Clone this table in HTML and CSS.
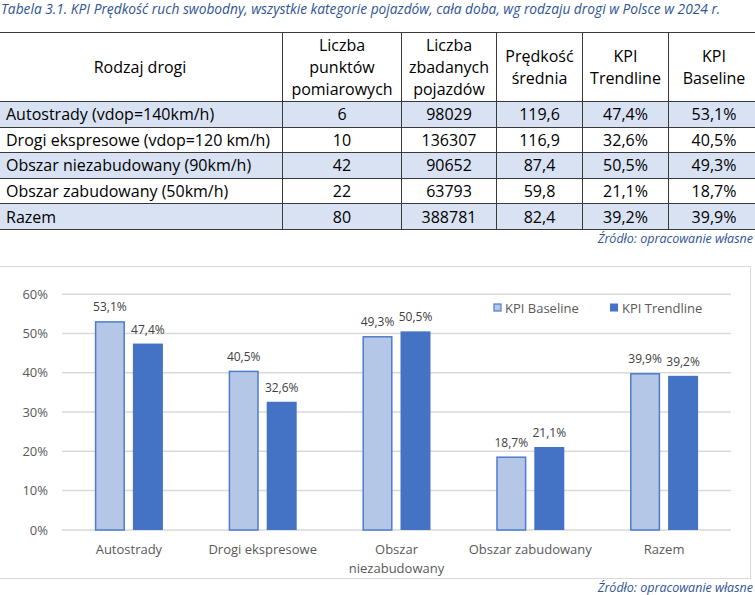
FILE: index.html
```html
<!DOCTYPE html>
<html lang="pl">
<head>
<meta charset="utf-8">
<title>KPI Prędkość</title>
<link rel="stylesheet" href="styles.css">
</head>
<body>
<div class="page">
  <div class="caption">Tabela 3.1. KPI Prędkość ruch swobodny, wszystkie kategorie pojazdów, cała doba, wg rodzaju drogi w Polsce w 2024 r.</div>
  <table class="kpi">
    <colgroup>
      <col class="c1"><col class="c2"><col class="c3"><col class="c4"><col class="c5"><col class="c6">
    </colgroup>
    <thead>
      <tr>
        <th>Rodzaj drogi</th>
        <th>Liczba<br>punktów<br>pomiarowych</th>
        <th class="soft">Liczba<br>zbadanych<br>pojazdów</th>
        <th class="soft">Prędkość<br>średnia</th>
        <th>KPI<br>Trendline</th>
        <th>KPI<br>Baseline</th>
      </tr>
    </thead>
    <tbody>
      <tr class="shade"><td class="name">Autostrady (vdop=140km/h)</td><td>6</td><td>98029</td><td class="soft">119,6</td><td>47,4%</td><td>53,1%</td></tr>
      <tr><td class="name">Drogi ekspresowe (vdop=120 km/h)</td><td>10</td><td>136307</td><td class="soft">116,9</td><td>32,6%</td><td>40,5%</td></tr>
      <tr class="shade"><td class="name">Obszar niezabudowany (90km/h)</td><td>42</td><td>90652</td><td class="soft">87,4</td><td>50,5%</td><td>49,3%</td></tr>
      <tr><td class="name">Obszar zabudowany (50km/h)</td><td>22</td><td>63793</td><td class="soft">59,8</td><td>21,1%</td><td>18,7%</td></tr>
      <tr class="shade"><td class="name">Razem</td><td>80</td><td>388781</td><td class="soft">82,4</td><td>39,2%</td><td>39,9%</td></tr>
    </tbody>
  </table>
  <div class="source">Źródło: opracowanie własne</div>

  <div class="chart">
    <svg class="chart-svg" width="751" height="311" viewBox="-1 266 751 311" xmlns="http://www.w3.org/2000/svg">
      <g class="grid" stroke="#d9d9d9" stroke-width="1.5">
        <line x1="62" x2="731" y1="293.3" y2="293.3"/>
        <line x1="62" x2="731" y1="332.6" y2="332.6"/>
        <line x1="62" x2="731" y1="371.7" y2="371.7"/>
        <line x1="62" x2="731" y1="411" y2="411"/>
        <line x1="62" x2="731" y1="450.3" y2="450.3"/>
        <line x1="62" x2="731" y1="489.6" y2="489.6"/>
        <line x1="62" x2="731" y1="529" y2="529"/>
      </g>
      <g class="ylab" font-family="'Open Sans', sans-serif" font-size="13" fill="#595959" text-anchor="end">
        <text x="48" y="297.8">60%</text>
        <text x="48" y="337.1">50%</text>
        <text x="48" y="376.2">40%</text>
        <text x="48" y="415.5">30%</text>
        <text x="48" y="454.8">20%</text>
        <text x="48" y="494.1">10%</text>
        <text x="48" y="533.5">0%</text>
      </g>
      <g class="base" fill="#b4c7e7" stroke="#4f7bcb" stroke-width="1.5">
        <rect x="95.6" y="320.9" width="28.6" height="208.1"/>
        <rect x="229.4" y="370.4" width="28.6" height="158.6"/>
        <rect x="363.2" y="335.8" width="28.6" height="193.2"/>
        <rect x="497" y="456.2" width="28.6" height="72.8"/>
        <rect x="630.8" y="372.8" width="28.6" height="156.2"/>
      </g>
      <g class="trend" fill="#4472c4">
        <rect x="132.9" y="342.56" width="30" height="186.44"/>
        <rect x="266.7" y="400.77" width="30" height="128.23"/>
        <rect x="400.5" y="330.37" width="30" height="198.63"/>
        <rect x="534.3" y="446.01" width="30" height="82.99"/>
        <rect x="668.1" y="374.81" width="30" height="154.19"/>
      </g>
      <g class="vals" font-family="'Open Sans', sans-serif" font-size="12" fill="#404040" text-anchor="middle">
        <text x="109.9" y="310.1">53,1%</text>
        <text x="147.9" y="332.6">47,4%</text>
        <text x="243.7" y="359.7">40,5%</text>
        <text x="281.7" y="390.8">32,6%</text>
        <text x="377.5" y="325.1">49,3%</text>
        <text x="415.5" y="320.4">50,5%</text>
        <text x="511.3" y="445.5">18,7%</text>
        <text x="549.3" y="436">21,1%</text>
        <text x="645.1" y="362.1">39,9%</text>
        <text x="683.1" y="364.8">39,2%</text>
      </g>
      <g class="xlab" font-family="'Open Sans', sans-serif" font-size="13" fill="#595959" text-anchor="middle">
        <text x="128.9" y="553">Autostrady</text>
        <text x="262.7" y="553">Drogi ekspresowe</text>
        <text x="396.5" y="553">Obszar</text>
        <text x="396.5" y="571.5">niezabudowany</text>
        <text x="530.3" y="553">Obszar zabudowany</text>
        <text x="664.1" y="553">Razem</text>
      </g>
      <g class="legend" font-family="'Open Sans', sans-serif" font-size="13" fill="#595959">
        <rect x="494" y="303" width="7" height="7" fill="#b4c7e7" stroke="#4f7bcb" stroke-width="1.2"/>
        <text x="505" y="311.5">KPI Baseline</text>
        <rect x="610" y="302.5" width="8" height="8" fill="#4472c4"/>
        <text x="622" y="311.5">KPI Trendline</text>
      </g>
    </svg>
  </div>
  <div class="source bottom">Źródło: opracowanie własne</div>
</div>
</body>
</html>
```

FILE: styles.css
```css
html, body {
  margin: 0;
  padding: 0;
  overflow: hidden;
  background: #ffffff;
}

.page {
  width: 755px;
  height: 595px;
  overflow: hidden;
  font-family: "Open Sans", "DejaVu Sans", sans-serif;
  color: #000;
}

.caption {
  height: 18px;
  line-height: 18px;
  margin: 0 0 14px 1px;
  font-size: 13.75px;
  font-style: italic;
  color: #2f5496;
  white-space: nowrap;
}

.kpi {
  border-collapse: collapse;
  table-layout: fixed;
  width: 762px;
  margin-left: -3px;
  font-size: 16px;
}

.kpi .c1 { width: 285px; }
.kpi .c2 { width: 119px; }
.kpi .c3 { width: 95px; }
.kpi .c4 { width: 86px; }
.kpi .c5 { width: 86px; }
.kpi .c6 { width: 91px; }

.kpi th,
.kpi td {
  border: 1px solid #3a3a3a;
  text-align: center;
  vertical-align: middle;
  padding: 0;
  white-space: nowrap;
}

.kpi th {
  font-weight: normal;
  line-height: 22px;
  height: 66px;
  padding: 1px 0;
}

.kpi th.soft,
.kpi td.soft {
  border-left-color: #8a8a8a;
}

.kpi td {
  height: 24.6px;
  line-height: 22px;
}

.kpi td.name {
  text-align: left;
  padding-left: 8px;
}

.kpi tr.shade td {
  background: #d9e2f3;
}

.source {
  text-align: right;
  padding-right: 2px;
  font-size: 12.5px;
  line-height: 18px;
  height: 18px;
  font-style: italic;
  color: #2f5496;
  white-space: nowrap;
}

.chart {
  margin-top: 18px;
  margin-left: -2px;
  width: 751px;
  height: 311px;
  border: 1px solid #d9d9d9;
  background: #fff;
}

.chart-svg {
  display: block;
}

.source.bottom {
  margin-top: 0;
  line-height: 17px;
  height: 17px;
}
```
